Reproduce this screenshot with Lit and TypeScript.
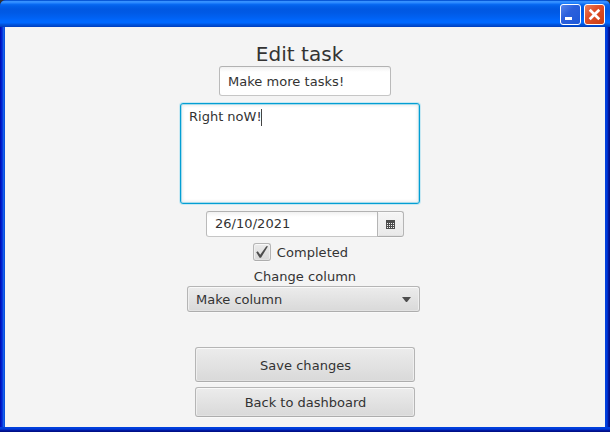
import { LitElement, html, css, svg } from "lit";
import { customElement, state } from "lit/decorators.js";

@customElement("title-bar")
class TitleBar extends LitElement {
  static styles = css`
    :host {
      display: flex;
      box-sizing: border-box;
      height: 27px;
      padding: 4px 5px 0 0;
      justify-content: flex-end;
      gap: 3px;
      background: linear-gradient(to bottom, #0858d8 0, #0858d8 1px, #3a94ff 1px, #2a88ff 3px, #0a6cf4 4px, #0260ea 6px, #0058e2 9px, #005ae6 13px, #0062f4 18px, #0068ff 21px, #0068ff 23px, #0058e4 24px, #0048cc 26px, #003cbc 27px);
    }
    svg { display: block; width: 21px; height: 21px; }
  `;
  render() {
    return html`
      <svg viewBox="0 0 21 21">
        <defs><linearGradient id="b" x1="0" y1="0" x2="1" y2="1">
          <stop offset="0" stop-color="#5a88ec" /><stop offset=".4" stop-color="#2c60dc" /><stop offset="1" stop-color="#1c58d8" />
        </linearGradient></defs>
        <rect x=".5" y=".5" width="20" height="20" rx="2.5" fill="url(#b)" stroke="#fff" />
        <rect x="5" y="13" width="7" height="3" fill="#fff" />
      </svg>
      <svg viewBox="0 0 21 21">
        <defs><linearGradient id="r" x1="0" y1="0" x2="1" y2="1">
          <stop offset="0" stop-color="#ea8462" /><stop offset=".4" stop-color="#e0502a" /><stop offset="1" stop-color="#c83c10" />
        </linearGradient></defs>
        <rect x=".5" y=".5" width="20" height="20" rx="2.5" fill="url(#r)" stroke="#fff" />
        <path d="M5.7 5.7 15.3 15.3M15.3 5.7 5.7 15.3" stroke="#fff" stroke-width="2.7" />
      </svg>`;
  }
}

@customElement("app-root")
class AppRoot extends LitElement {
  @state() private heading = "Edit task";

  static styles = css`
    :host {
      display: block;
      height: 432px;
      background: #333;
      font: 13px/16px "DejaVu Sans", sans-serif;
      letter-spacing: 0.04px;
      color: #333;
    }
    * { box-sizing: border-box; }
    .window {
      height: 432px;
      border-radius: 6px 6px 0 0;
      overflow: hidden;
      display: grid;
      grid-template: 27px 400px 5px / 5px 600px 5px;
      background: #0030c8;
    }
    title-bar { grid-column: 1 / -1; }
    .left { background: linear-gradient(to right, #0010b8 0 1px, #0020d0 1px 2px, #0838dc 2px 3px, #1660e8 3px 4px, #0850e0 4px); }
    .right { background: linear-gradient(to right, #0040dc 0 1px, #003cdc 1px 2px, #0030c8 2px 3px, #0018a0 3px 4px, #001088 4px); }
    .bottom { grid-column: 1 / -1; background: linear-gradient(to bottom, #0040dc 0 1px, #003cdc 1px 2px, #0030c8 2px 3px, #0018a0 3px 4px, #001088 4px); }
    .form {
      background: #f4f4f4;
      display: flex;
      flex-direction: column;
      align-items: center;
      padding-top: 15px;
    }
    .heading { font-size: 20px; line-height: 24px; margin-right: 11px; white-space: nowrap; }
    .field {
      background: linear-gradient(to bottom, #f1f1f1, #fff 5px);
      border: 1px solid #bababa;
      border-top-color: #b2b2b2;
      border-bottom-color: #c6c6c6;
      border-radius: 3px;
      padding-left: 8px;
      display: flex;
      align-items: center;
    }
    .name { width: 172px; height: 30px; padding-top: 2px; }
    .notes {
      width: 240px;
      height: 101px;
      margin-top: 7px;
      margin-right: 10px;
      padding-top: 5px;
      align-items: flex-start;
      border: 1px solid #039ed3;
      background: #fff;
      box-shadow: 0 0 0 1px #c8e8f2, inset 0 0 0 1px #a8dcec, inset 0 0 3px 2px #eeeeee;
    }
    .notes span { letter-spacing: 0; }
    .caret { width: 1px; height: 17px; margin-left: -1px; background: #444; }
    .date { display: flex; width: 198px; height: 26px; margin-top: 7px; }
    .date .field { width: 172px; border-radius: 3px 0 0 3px; padding-bottom: 1px; }
    .button {
      border: 1px solid #b5b5b5;
      border-bottom-color: #adadad;
      border-radius: 3px;
      background: linear-gradient(to bottom, #ececec, #d9d9d9);
      box-shadow: inset 0 1px #f9f9f9, inset 1px 0 #efefef, inset -1px 0 #efefef, inset 0 -1px #e2e2e2, 0 1px #f9f9f9;
      display: flex;
      align-items: center;
      justify-content: center;
    }
    .pick { width: 27px; margin-left: -1px; border-radius: 0 3px 3px 0; background: linear-gradient(#f6f6f6, #e9e9e9); }
    .check { display: flex; align-items: center; gap: 6px; height: 18px; margin: 6px 9px 0 0; }
    .check span { padding-top: 2px; }
    .box { width: 18px; height: 18px; }
    .label { height: 16px; margin-top: 8px; }
    .combo { width: 233px; height: 26px; margin: 1px 3px 0 0; padding: 0 8px; justify-content: space-between; }
    .combo span { padding-top: 1px; letter-spacing: 0; }
    .save { width: 220px; height: 35px; margin-top: 35px; padding: 2px 0 0 1px; }
    .back { width: 220px; height: 30px; margin-top: 5px; padding: 2px 0 0 1px; letter-spacing: 0; }
    svg { display: block; flex: none; }
  `;

  private dots() {
    return [3, 5, 7].flatMap((y) =>
      [1, 3, 5, 7].map((x) => svg`<rect x=${x} y=${y} width="1" height="1" fill="#f4f4f4" />`),
    );
  }

  render() {
    return html`
      <div class="window">
        <title-bar></title-bar>
        <div class="left"></div>
        <div class="form">
          <div class="heading">${this.heading}</div>
          <div class="field name">Make more tasks!</div>
          <div class="field notes"><span>Right noW!</span><i class="caret"></i></div>
          <div class="date">
            <div class="field">26/10/2021</div>
            <div class="button pick">
              <svg width="9" height="9" viewBox="0 0 9 9"><path d="M0 0h9v9H0z" fill="#4d4d4d" />${this.dots()}</svg>
            </div>
          </div>
          <div class="check">
            <div class="button box">
              <svg width="14" height="14" viewBox="0 0 14 14"><path d="M1.2 7.2 2.8 6.2 5.2 9.8 11.3 1.2 13 1.2 6 12.8 4.6 12.8Z" fill="#4d4d4d" /></svg>
            </div>
            <span>Completed</span>
          </div>
          <div class="label">Change column</div>
          <div class="button combo">
            <span>Make column</span>
            <svg width="9" height="5" viewBox="0 0 9 5"><path d="M0 0h9L5 5H4z" fill="#4d4d4d" /></svg>
          </div>
          <div class="button save">Save changes</div>
          <div class="button back">Back to dashboard</div>
        </div>
        <div class="right"></div>
        <div class="bottom"></div>
      </div>`;
  }
}
